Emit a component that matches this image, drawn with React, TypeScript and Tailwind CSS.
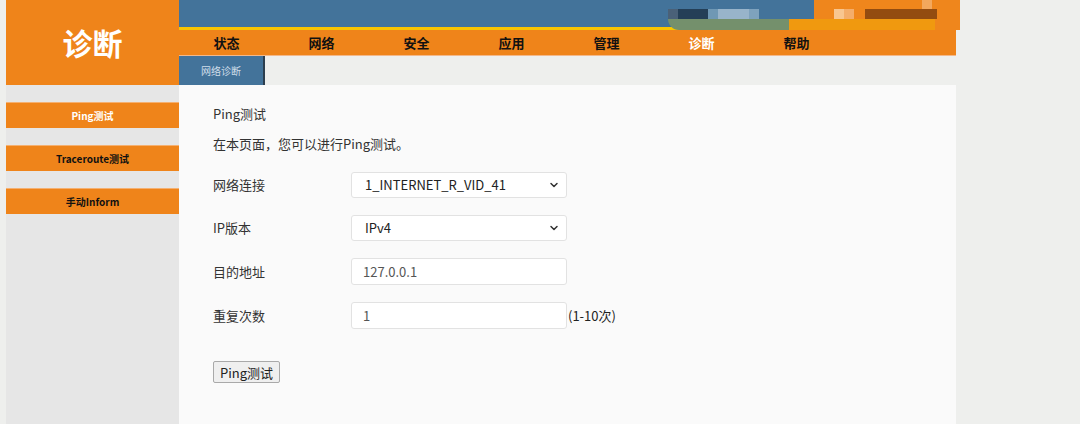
import { ChevronDown } from 'lucide-react'

const navItems = ['状态', '网络', '安全', '应用', '管理', '诊断', '帮助']

const sideItems = [
  { label: 'Ping测试', active: true },
  { label: 'Traceroute测试', active: false },
  { label: '手动Inform', active: false },
]

const font = "font-['Noto_Sans_CJK_SC','Noto_Sans',sans-serif]"

function SelectBox({ value }: { value: string }) {
  return (
    <div className="flex h-[26px] w-[216px] items-center justify-between rounded-[3px] border border-[#e2e2e2] bg-white pl-[13px] pr-[6px] text-[13px] text-[#222]">
      <span>{value}</span>
      <ChevronDown className="h-3 w-3 text-[#333]" strokeWidth={3} aria-hidden="true" />
    </div>
  )
}

function TextBox({ value }: { value: string }) {
  return (
    <div className="flex h-[27px] w-[216px] items-center rounded-[3px] border border-[#e2e2e2] bg-white pl-[11px] text-[13px] text-[#555]">
      {value}
    </div>
  )
}

export default function App() {
  return (
    <div className={`flex h-[424px] w-[1080px] overflow-hidden bg-[#eeefed] pl-[6px] ${font}`}>
      {/* left column */}
      <div className="flex w-[173px] flex-col">
        <div className="flex h-[85px] items-center justify-center bg-[#ef841a]">
          <span className="text-[30px] font-bold text-white">诊断</span>
        </div>
        <div className="flex flex-1 flex-col gap-[17px] bg-[#e6e6e6] pt-[17px]">
          {sideItems.map((item) => (
            <div
              key={item.label}
              className={`flex h-[26px] items-center justify-center border-t border-[#f5b070] bg-[#ef841a] text-[10px] font-bold ${item.active ? 'text-white' : 'text-[#111]'}`}
            >
              {item.label}
            </div>
          ))}
        </div>
      </div>

      {/* main */}
      <div className="flex w-[777px] flex-col">
        <div className="relative h-[27px] bg-[#43739a]">
          {/* blurred logo */}
          <div className="absolute left-[489px] top-[19px] h-[11px] w-[290px] rounded-bl-[40px] bg-[#74906c]" />
          <div className="absolute left-[489px] top-[9px] flex h-[10px]">
            <div className="w-[10px] bg-[#4a6178]" />
            <div className="w-[30px] bg-[#243f57]" />
            <div className="w-[10px] bg-[#6f98b4]" />
            <div className="w-[31px] bg-[#98b4ca]" />
            <div className="w-[10px] bg-[#7ea2bd]" />
          </div>
          <div className="absolute left-[635px] top-0 h-[30px] w-[146px] bg-[#ef861c]">
            <div className="absolute left-[108px] top-0 h-[27px] w-[10px] bg-[#f3a85d]" />
            <div className="absolute left-[-25px] top-[19px] h-[11px] w-[146px] bg-[#f0990f]" />
            <div className="absolute left-[20px] top-[9px] h-[10px] w-[10px] bg-[#f8c690]" />
            <div className="absolute left-[30px] top-[9px] h-[10px] w-[10px] bg-[#f4ad6a]" />
            <div className="absolute left-[51px] top-[9px] h-[10px] w-[72px] bg-[#934c10]" />
          </div>
        </div>
        <div className="h-[3px] bg-[#f9c400]" />
        <div className="flex h-[26px] items-center border-b border-[#f3b88a] bg-[#ef841a]">
          {navItems.map((item) => (
            <div
              key={item}
              className={`w-[95px] text-center text-[13px] font-bold ${item === '诊断' ? 'text-white' : 'text-[#111]'}`}
            >
              {item}
            </div>
          ))}
        </div>
        <div className="flex h-[29px] bg-[#eeefed]">
          <div className="flex w-[86px] items-center justify-center border-r-2 border-[#2c3e4e] bg-[#43739a] text-[10px] text-[#cfdde9]">
            网络诊断
          </div>
        </div>

        {/* content */}
        <div className="flex-1 bg-[#fafafa] pl-[34px] pt-[20px] text-[13px] text-[#333]">
          <p className="leading-[18px]">Ping测试</p>
          <p className="mt-[12px] leading-[18px]">在本页面，您可以进行Ping测试。</p>

          <div className="mt-[19px] flex flex-col gap-[17px]">
            <div className="flex items-center">
              <span className="w-[138px]">网络连接</span>
              <SelectBox value="1_INTERNET_R_VID_41" />
            </div>
            <div className="flex items-center">
              <span className="w-[138px]">IP版本</span>
              <SelectBox value="IPv4" />
            </div>
            <div className="flex items-center">
              <span className="w-[138px]">目的地址</span>
              <TextBox value="127.0.0.1" />
            </div>
            <div className="flex items-center">
              <span className="w-[138px]">重复次数</span>
              <TextBox value="1" />
              <span className="ml-[1px] text-[#222]">(1-10次)</span>
            </div>
          </div>

          <button className="mt-[32px] h-[22px] rounded-[2px] border border-[#a9a9a9] bg-[#efefef] px-[6px] text-[13px] leading-none text-[#222]">
            Ping测试
          </button>
        </div>
      </div>
    </div>
  )
}
